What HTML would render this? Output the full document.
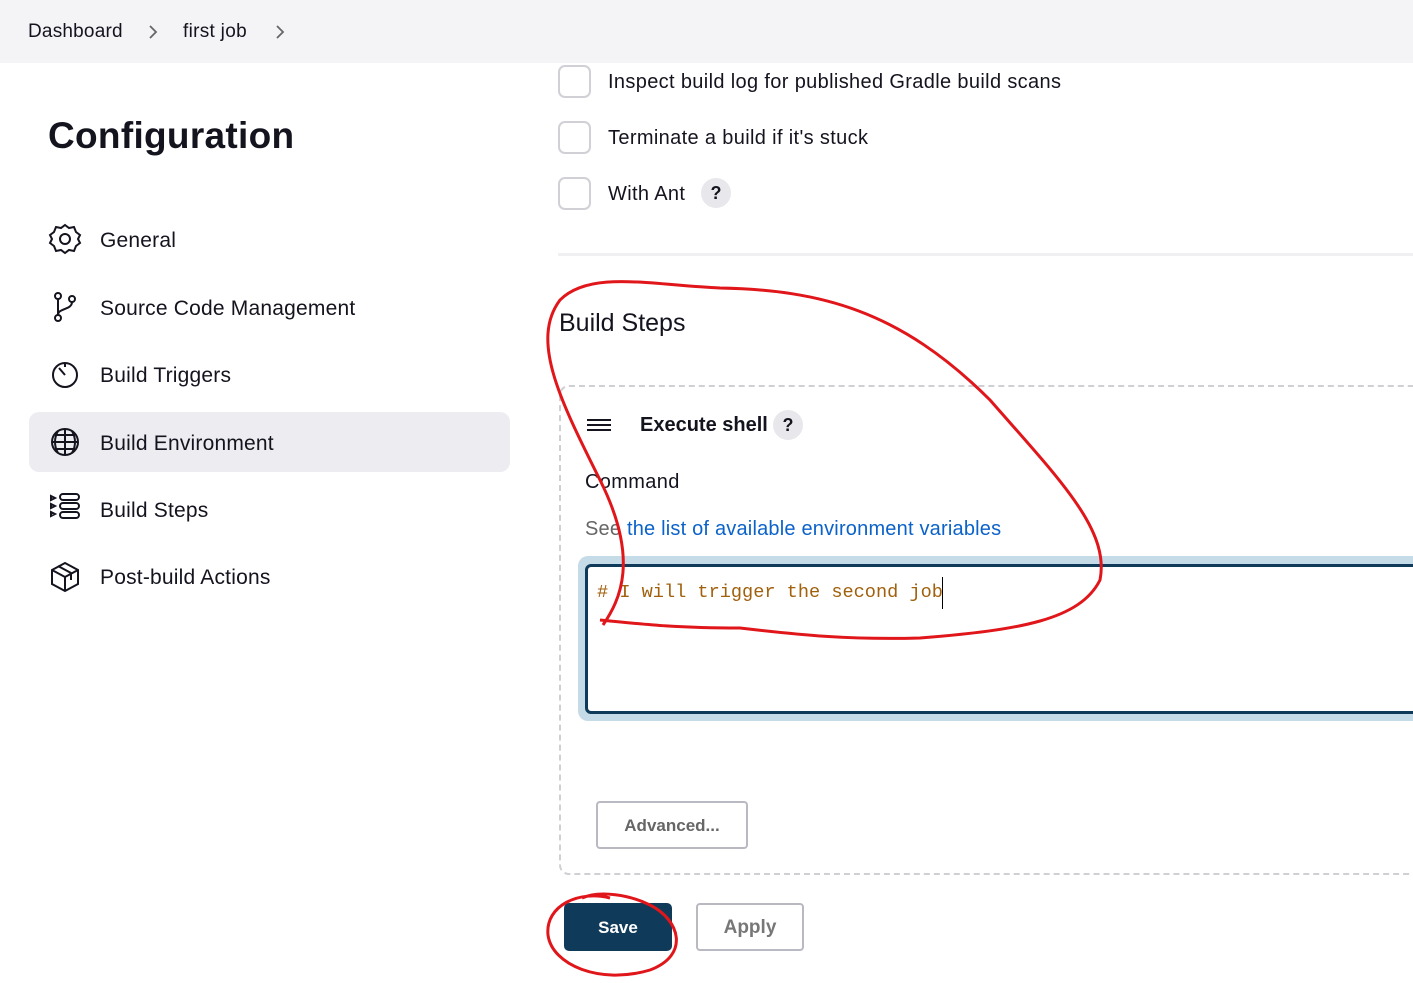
<!DOCTYPE html>
<html><head><meta charset="utf-8"><style>
*{box-sizing:border-box;margin:0;padding:0}
body{width:1413px;height:983px;overflow:hidden;background:#fff;font-family:"Liberation Sans",sans-serif;color:#14141f;position:relative}
.top{position:absolute;left:0;top:0;width:1413px;height:63px;background:#f4f4f6}
.a{position:absolute;white-space:nowrap}
.cb{position:absolute;left:558px;width:33px;height:33px;border:2px solid #d0d0d6;border-radius:7px}
.nav{position:absolute;left:100px;font-size:21px;letter-spacing:0.2px}
.q{position:absolute;width:30px;height:30px;border-radius:50%;background:#e8e8ec;text-align:center;line-height:30px;font-size:18px;font-weight:bold}
.t{font-size:20px;letter-spacing:0.35px}
</style></head><body>
<div class="top"></div>
<div class="a" style="left:28px;top:21px;font-size:19px;letter-spacing:0.2px">Dashboard</div>
<svg class="a" style="left:147px;top:24px" width="12" height="16" fill="none" stroke="#666" stroke-width="1.8"><path d="M3 2l6 6-6 6"/></svg>
<div class="a" style="left:183px;top:21px;font-size:19px;letter-spacing:0.3px">first job</div>
<svg class="a" style="left:274px;top:24px" width="12" height="16" fill="none" stroke="#666" stroke-width="1.8"><path d="M3 2l6 6-6 6"/></svg>
<div class="a" style="left:48px;top:115px;font-size:37px;font-weight:bold;letter-spacing:0.3px">Configuration</div>
<div style="position:absolute;left:29px;top:412px;width:481px;height:60px;background:#ececf1;border-radius:10px"></div>
<svg class="a" style="left:48px;top:222px" width="36" height="380" fill="none" stroke="#14141f" stroke-width="2">
<circle cx="17" cy="17" r="5"/><path d="M17 3l4 3 5-1 2 5 4 3-2 4 2 4-4 3-2 5-5-1-4 3-4-3-5 1-2-5-4-3 2-4-2-4 4-3 2-5 5 1z"/>
<circle cx="10" cy="74" r="3"/><circle cx="10" cy="96" r="3"/><circle cx="24" cy="77" r="3"/><path d="M10 77v16M24 80c0 8-14 6-14 13"/>
<circle cx="17" cy="153" r="12"/><path d="M17 141v4M17 153l-6-7"/>
<circle cx="17" cy="220" r="13"/><path d="M4 220h26M17 207v26M10 209c-4 7-4 15 0 22M24 209c4 7 4 15 0 22M7 213h20M7 227h20"/>
<path d="M3 274l4 2-4 2zM3 282l4 2-4 2zM3 290l4 2-4 2z" /><rect x="12" y="272" width="19" height="6" rx="3"/><rect x="12" y="281" width="19" height="6" rx="3"/><rect x="12" y="290" width="19" height="6" rx="3"/>
<path d="M4 348l13-7 13 7v14l-13 7-13-7zM4 348l13 7 13-7M17 355v14M10 344l13 7v7"/>
</svg>
<div class="nav" style="top:229px">General</div>
<div class="nav" style="top:297px">Source Code Management</div>
<div class="nav" style="top:364px">Build Triggers</div>
<div class="nav" style="top:432px">Build Environment</div>
<div class="nav" style="top:499px">Build Steps</div>
<div class="nav" style="top:566px">Post-build Actions</div>
<div class="cb" style="top:65px"></div><div class="a t" style="left:608px;top:71px">Inspect build log for published Gradle build scans</div>
<div class="cb" style="top:121px"></div><div class="a t" style="left:608px;top:127px">Terminate a build if it's stuck</div>
<div class="cb" style="top:177px"></div><div class="a t" style="left:608px;top:183px">With Ant</div>
<div class="q" style="left:701px;top:178px">?</div>
<div style="position:absolute;left:558px;top:253px;width:855px;height:3px;background:#f0f0f2"></div>
<div class="a" style="left:559px;top:309px;font-size:25px">Build Steps</div>
<div style="position:absolute;left:559px;top:385px;width:870px;height:490px;border:2px dashed #cfcfd4;border-radius:10px"></div>
<div style="position:absolute;left:587px;top:419px;width:24px;height:12px;border-top:2px solid #14141f;border-bottom:2px solid #14141f"></div>
<div style="position:absolute;left:587px;top:424px;width:24px;height:2px;background:#14141f"></div>
<div class="a" style="left:640px;top:414px;font-size:20px;font-weight:bold">Execute shell</div>
<div class="q" style="left:773px;top:410px">?</div>
<div class="a t" style="left:585px;top:471px">Command</div>
<div class="a t" style="left:585px;top:518px;color:#666;letter-spacing:0.2px">See <span style="color:#0b62c9">the list of available environment variables</span></div>
<div style="position:absolute;left:578px;top:556px;width:850px;height:165px;background:#c5dbe8;border-radius:10px"></div>
<div style="position:absolute;left:585px;top:564px;width:840px;height:150px;background:#fff;border:3px solid #0f3a5a;border-radius:6px"></div>
<div class="a" style="left:597px;top:582px;font-family:'Liberation Mono',monospace;font-size:18.6px;color:#a0600c">#&nbsp;I will trigger the second job</div>
<div style="position:absolute;left:942px;top:577px;width:1px;height:32px;background:#000"></div>
<div style="position:absolute;left:596px;top:801px;width:152px;height:48px;border:2px solid #b9b9c2;border-radius:4px;text-align:center;line-height:46px;font-size:17px;font-weight:bold;color:#666">Advanced...</div>
<div style="position:absolute;left:564px;top:903px;width:108px;height:48px;background:#0f3a5a;border-radius:5px;text-align:center;line-height:50px;font-size:17px;font-weight:bold;color:#fff">Save</div>
<div style="position:absolute;left:696px;top:903px;width:108px;height:48px;border:2px solid #b9b9c2;border-radius:4px;text-align:center;line-height:46px;font-size:19px;font-weight:bold;color:#777">Apply</div>
<svg class="a" style="left:0;top:0" width="1413" height="983" fill="none" stroke="#e0161a" stroke-width="3">
<path d="M603 625C620 600 640 560 600 480 560 400 530 340 560 300 590 270 650 285 720 288 820 290 900 310 990 400 1060 480 1110 530 1100 580 1080 620 1020 630 920 638 850 640 800 635 740 628 680 628 650 625 600 620"/>
<path d="M610 898C580 890 545 905 548 935 552 965 600 985 650 970 690 955 680 920 650 905 630 895 600 890 582 898"/>
</svg>
</body></html>
